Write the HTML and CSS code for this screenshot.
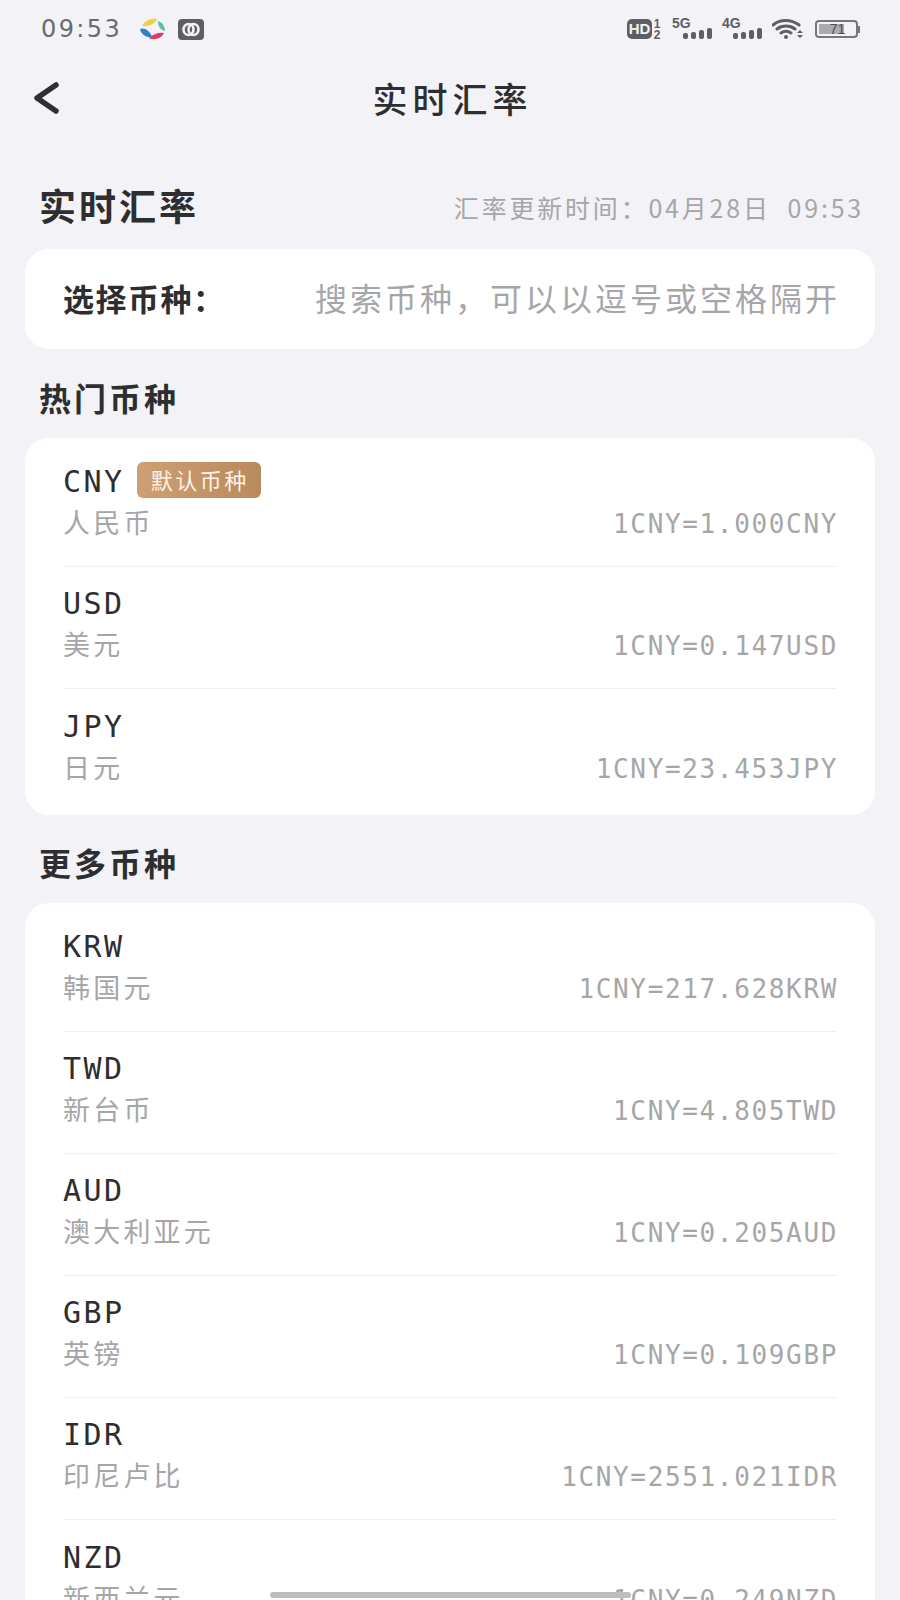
FILE: index.html
```html
<!DOCTYPE html>
<html lang="zh-CN">
<head>
    <meta charset="UTF-8">
    <meta name="viewport" content="width=device-width, initial-scale=1.0">
    <title>实时汇率</title>
    <link rel="stylesheet" href="styles.css">
</head>
<body>
    <div class="status-bar">
        <div class="status-left">
            <span class="clock">09:53</span>
            <svg class="app-logo" width="26" height="22" viewBox="0 0 26 22">
                <path d="M2 8C5 2 12 0 17 1C16 5 9 9 2 8Z" fill="#f2cf3f"/>
                <path d="M18 3C22 4 25 8 25 13C20 12 18 8 18 3Z" fill="#5cc4a4"/>
                <path d="M0 11C5 9 10 13 12 19C6 20 1 16 0 11Z" fill="#2d7fc9"/>
                <path d="M9 20C13 16 19 14 24 15C22 20 14 23 9 20Z" fill="#de3a6c"/>
            </svg>
            <svg width="26" height="21" viewBox="0 0 26 21">
                <rect width="26" height="21" rx="4" fill="#5f5f63"/>
                <ellipse cx="10.5" cy="10.5" rx="5" ry="5.5" fill="none" stroke="#f2f2f7" stroke-width="2.6"/>
                <ellipse cx="15.5" cy="10.5" rx="5" ry="5.5" fill="none" stroke="#f2f2f7" stroke-width="2.6"/>
            </svg>
        </div>
        <div class="status-right">
            <svg width="36" height="30" viewBox="0 -4 36 30">
                <rect y="1" width="25" height="20" rx="5" fill="#5f5f63"/>
                <text x="12.5" y="16" class="hd-label" text-anchor="middle">HD</text>
                <text x="30" y="10" class="sim-label" text-anchor="middle">1</text>
                <text x="30" y="21" class="sim-label" text-anchor="middle">2</text>
            </svg>
            <svg width="41" height="32" viewBox="0 -4 41 32">
                <text x="0" y="11" class="net-label">5G</text>
                <rect x="11" y="16" width="5" height="6" rx="2" fill="#5f5f63"/>
                <rect x="19" y="15" width="5" height="7" rx="2" fill="#5f5f63"/>
                <rect x="27" y="13" width="5" height="9" rx="2" fill="#5f5f63"/>
                <rect x="35" y="11" width="5" height="11" rx="2" fill="#5f5f63"/>
            </svg>
            <svg width="41" height="32" viewBox="0 -4 41 32">
                <text x="0" y="11" class="net-label">4G</text>
                <rect x="11" y="16" width="5" height="6" rx="2" fill="#5f5f63"/>
                <rect x="19" y="15" width="5" height="7" rx="2" fill="#5f5f63"/>
                <rect x="27" y="13" width="5" height="9" rx="2" fill="#5f5f63"/>
                <rect x="35" y="11" width="5" height="11" rx="2" fill="#5f5f63"/>
            </svg>
            <svg width="31" height="20" viewBox="0 0 31 20">
                <path d="M1 6C8 0 19 0 27 6M5 10C10 6 18 6 23 10M9 14C12 12 16 12 19 14" fill="none" stroke="#5f5f63" stroke-width="3" stroke-linecap="round"/>
                <circle cx="14" cy="18" r="2" fill="#5f5f63"/>
                <path d="M28 11L31 14H25ZM28 19L25 16H31Z" fill="#5f5f63"/>
            </svg>
            <div class="battery">
                <div class="battery-body">
                    <div class="battery-level" style="width: 71%"></div>
                    <span class="battery-text">71</span>
                </div>
                <div class="battery-cap"></div>
            </div>
        </div>
    </div>

    <div class="nav-bar">
        <svg class="back-icon" width="26" height="32" viewBox="0 0 26 32">
            <path d="M23 3L4 16L23 29" fill="none" stroke="#2f2f33" stroke-width="5.5" stroke-linecap="round" stroke-linejoin="round"/>
        </svg>
        <h1>实时汇率</h1>
    </div>

    <div class="page-head">
        <h2 class="page-title">实时汇率</h2>
        <span class="update-time">汇率更新时间&#xFF1A;04月28日&nbsp; 09:53</span>
    </div>

    <div class="card search-card">
        <span class="search-label">选择币种&#xFF1A;</span>
        <span class="search-hint">搜索币种&#xFF0C;可以以逗号或空格隔开</span>
    </div>

    <h3 class="section-title">热门币种</h3>
    <div class="card">
        <div class="rate-row">
            <div>
                <div class="code">CNY<span class="tag">默认币种</span></div>
                <div class="name">人民币</div>
            </div>
            <div class="rate">1CNY=1.000CNY</div>
        </div>
        <div class="rate-row">
            <div>
                <div class="code">USD</div>
                <div class="name">美元</div>
            </div>
            <div class="rate">1CNY=0.147USD</div>
        </div>
        <div class="rate-row">
            <div>
                <div class="code">JPY</div>
                <div class="name">日元</div>
            </div>
            <div class="rate">1CNY=23.453JPY</div>
        </div>
    </div>

    <h3 class="section-title">更多币种</h3>
    <div class="card">
        <div class="rate-row">
            <div>
                <div class="code">KRW</div>
                <div class="name">韩国元</div>
            </div>
            <div class="rate">1CNY=217.628KRW</div>
        </div>
        <div class="rate-row">
            <div>
                <div class="code">TWD</div>
                <div class="name">新台币</div>
            </div>
            <div class="rate">1CNY=4.805TWD</div>
        </div>
        <div class="rate-row">
            <div>
                <div class="code">AUD</div>
                <div class="name">澳大利亚元</div>
            </div>
            <div class="rate">1CNY=0.205AUD</div>
        </div>
        <div class="rate-row">
            <div>
                <div class="code">GBP</div>
                <div class="name">英镑</div>
            </div>
            <div class="rate">1CNY=0.109GBP</div>
        </div>
        <div class="rate-row">
            <div>
                <div class="code">IDR</div>
                <div class="name">印尼卢比</div>
            </div>
            <div class="rate">1CNY=2551.021IDR</div>
        </div>
        <div class="rate-row">
            <div>
                <div class="code">NZD</div>
                <div class="name">新西兰元</div>
            </div>
            <div class="rate">1CNY=0.249NZD</div>
        </div>
    </div>

    <div class="scroll-thumb"></div>
</body>
</html>
```

FILE: styles.css
```css
:root {
    --page-bg: #f2f2f7;
    --text-color: #2e2e30;
    --muted-color: #a6a6a8;
    --icon-color: #5f5f63;
    --line-color: #efeff2;
}

* {
    margin: 0;
    padding: 0;
    box-sizing: border-box;
}

html, body {
    height: 1600px;
    overflow: hidden;
}

body {
    position: relative;
    background-color: var(--page-bg);
    color: var(--text-color);
    font-family: "DejaVu Sans", "Noto Sans CJK SC", sans-serif;
}

.status-bar {
    display: flex;
    justify-content: space-between;
    align-items: center;
    height: 58px;
    padding: 0 40px 0 41px;
}

.status-left {
    display: flex;
    align-items: center;
    gap: 12px;
}

.clock {
    width: 87px;
    font-family: "DejaVu Sans", sans-serif;
    font-size: 24px;
    letter-spacing: 2.4px;
    color: #6b6b6f;
}

.status-right {
    display: flex;
    align-items: center;
    gap: 9px;
}

.hd-label {
    font-family: "Liberation Sans", sans-serif;
    font-size: 15px;
    font-weight: 700;
    fill: #f2f2f7;
}

.sim-label, .net-label {
    font-family: "Liberation Sans", sans-serif;
    font-weight: 700;
    fill: var(--icon-color);
}

.sim-label {
    font-size: 12px;
}

.net-label {
    font-size: 14px;
}

.battery {
    display: flex;
    align-items: center;
    margin-left: 3px;
}

.battery-body {
    position: relative;
    width: 43px;
    height: 18px;
    padding: 2px;
    border: 2px solid #77777b;
    border-radius: 4px;
}

.battery-level {
    height: 100%;
    background-color: #ababad;
}

.battery-text {
    position: absolute;
    top: 0;
    left: 2px;
    right: 0;
    text-align: center;
    font-family: "Liberation Sans", sans-serif;
    font-size: 14px;
    line-height: 14px;
    color: #4c4c50;
}

.battery-cap {
    width: 2px;
    height: 7px;
    background-color: #77777b;
}

.nav-bar {
    position: relative;
    display: flex;
    justify-content: center;
    align-items: center;
    height: 80px;
}

.back-icon {
    position: absolute;
    left: 33px;
    top: 24px;
}

.nav-bar h1 {
    font-family: "Noto Sans CJK SC", sans-serif;
    font-size: 35px;
    font-weight: 500;
    letter-spacing: 5px;
    margin: 0 -5px 2px 0;
}

.page-head {
    display: flex;
    justify-content: space-between;
    align-items: center;
    height: 111px;
    padding: 27px 38px 0 39px;
}

.page-title, .section-title {
    font-family: "Noto Sans CJK SC", sans-serif;
    font-weight: 700;
}

.page-title {
    font-size: 37px;
    letter-spacing: 3px;
    margin-bottom: 4px;
}

.update-time {
    font-family: "Noto Sans CJK SC", sans-serif;
    font-size: 25px;
    letter-spacing: 2.8px;
    margin-right: -2px;
    color: var(--muted-color);
}

.card {
    margin: 0 25px;
    padding: 7px 38px 4px;
    background-color: #fff;
    border-radius: 24px;
}

.search-card {
    display: flex;
    justify-content: space-between;
    align-items: center;
    height: 100px;
    margin-bottom: 1px;
    padding: 0 38px 4px;
    font-family: "Noto Sans CJK SC", sans-serif;
}

.search-label {
    font-size: 31px;
    font-weight: 700;
    letter-spacing: 1.5px;
}

.search-hint {
    font-size: 32px;
    letter-spacing: 3px;
    margin-right: -3px;
    color: var(--muted-color);
}

.section-title {
    display: flex;
    align-items: center;
    height: 88px;
    padding: 5px 0 0 39px;
    font-size: 32px;
    letter-spacing: 3px;
}

.rate-row {
    display: flex;
    justify-content: space-between;
    align-items: flex-end;
    height: 122px;
    padding: 14px 0 21px;
    border-bottom: 1px solid var(--line-color);
}

.rate-row:last-child {
    border-bottom: none;
}

.code {
    display: flex;
    align-items: center;
    height: 42px;
    padding-top: 2px;
    font-family: "DejaVu Sans Mono", monospace;
    font-size: 30px;
    letter-spacing: 2.5px;
}

.tag {
    margin: -2px 0 0 12px;
    padding: 0 12px 0 14px;
    height: 36px;
    font-family: "Noto Sans CJK SC", sans-serif;
    font-size: 22px;
    line-height: 35px;
    letter-spacing: 2.5px;
    color: #fdf3e6;
    background: linear-gradient(90deg, #cf9f74, #b98a5c);
    border-radius: 6px;
}

.name {
    height: 42px;
    margin-bottom: 2px;
    font-family: "Noto Sans CJK SC", sans-serif;
    font-size: 27px;
    line-height: 42px;
    letter-spacing: 3.2px;
    color: var(--muted-color);
}

.rate {
    height: 42px;
    font-family: "DejaVu Sans Mono", monospace;
    font-size: 26px;
    line-height: 42px;
    letter-spacing: 1.65px;
    margin-right: -1px;
    color: var(--muted-color);
}

.scroll-thumb {
    position: absolute;
    left: 270px;
    top: 1592px;
    width: 361px;
    height: 6px;
    background-color: #bdbdbd;
    border-radius: 3px;
}
```
